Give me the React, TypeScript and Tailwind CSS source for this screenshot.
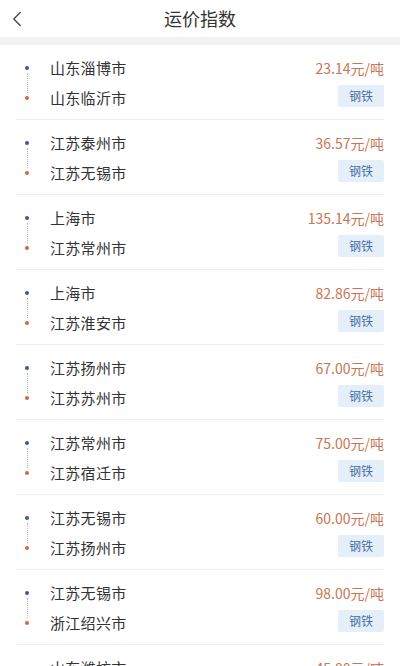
import {ChevronLeft} from "lucide-react";

type Route = {
  from: string;
  to: string;
  price: string;
  cargo: string;
};

const routes: Route[] = [
  {from: "山东淄博市", to: "山东临沂市", price: "23.14", cargo: "钢铁"},
  {from: "江苏泰州市", to: "江苏无锡市", price: "36.57", cargo: "钢铁"},
  {from: "上海市", to: "江苏常州市", price: "135.14", cargo: "钢铁"},
  {from: "上海市", to: "江苏淮安市", price: "82.86", cargo: "钢铁"},
  {from: "江苏扬州市", to: "江苏苏州市", price: "67.00", cargo: "钢铁"},
  {from: "江苏常州市", to: "江苏宿迁市", price: "75.00", cargo: "钢铁"},
  {from: "江苏无锡市", to: "江苏扬州市", price: "60.00", cargo: "钢铁"},
  {from: "江苏无锡市", to: "浙江绍兴市", price: "98.00", cargo: "钢铁"},
  {from: "山东潍坊市", to: "山东济南市", price: "45.00", cargo: "钢铁"},
];

function RouteRow({route}: {route: Route}) {
  return (
    <div className="flex h-[75px] border-b border-[#eeeeee]">
      <div className="flex w-[22px] flex-col items-center pt-[21px]">
        <div className="h-[4px] w-[4px] rounded-full bg-[#3a5a9c]" />
        <div className="mt-[3px] h-[20px] border-l border-dotted border-[#b5b5b5]" />
        <div className="mt-[3px] h-[4px] w-[4px] rounded-full bg-[#d8653f]" />
      </div>
      <div className="ml-[12px] flex flex-1 flex-col pt-[8px] text-[15px] tracking-[0.3px] text-[#333333]">
        <span className="h-[30px] leading-[30px]">{route.from}</span>
        <span className="h-[30px] leading-[30px]">{route.to}</span>
      </div>
      <div className="flex flex-col items-end pt-[8px]">
        <span className="h-[30px] text-[14px] leading-[30px] text-[#c77554]">
          {route.price}元/吨
        </span>
        <span className="mt-[2px] flex h-[22px] w-[46px] items-center justify-center rounded-[2px] bg-[#e4eff9] text-[12px] text-[#45709f]">
          {route.cargo}
        </span>
      </div>
    </div>
  );
}

export default function App() {
  return (
    <div
      className="h-[666px] w-full overflow-hidden bg-white"
      style={{fontFamily: '"Noto Sans CJK SC", "Noto Sans", sans-serif'}}
    >
      <div className="relative flex h-[37px] items-center justify-center">
        <ChevronLeft
          className="absolute left-[4px] top-[6px] text-[#444444]"
          size={26}
          strokeWidth={1.2}
        />
        <span className="text-[18px] text-[#333333]">运价指数</span>
      </div>
      <div className="h-[8px] bg-[#f2f2f2]" />
      <div className="px-[16px]">
        {routes.map((r, i) => (
          <RouteRow key={i} route={r} />
        ))}
      </div>
    </div>
  );
}
